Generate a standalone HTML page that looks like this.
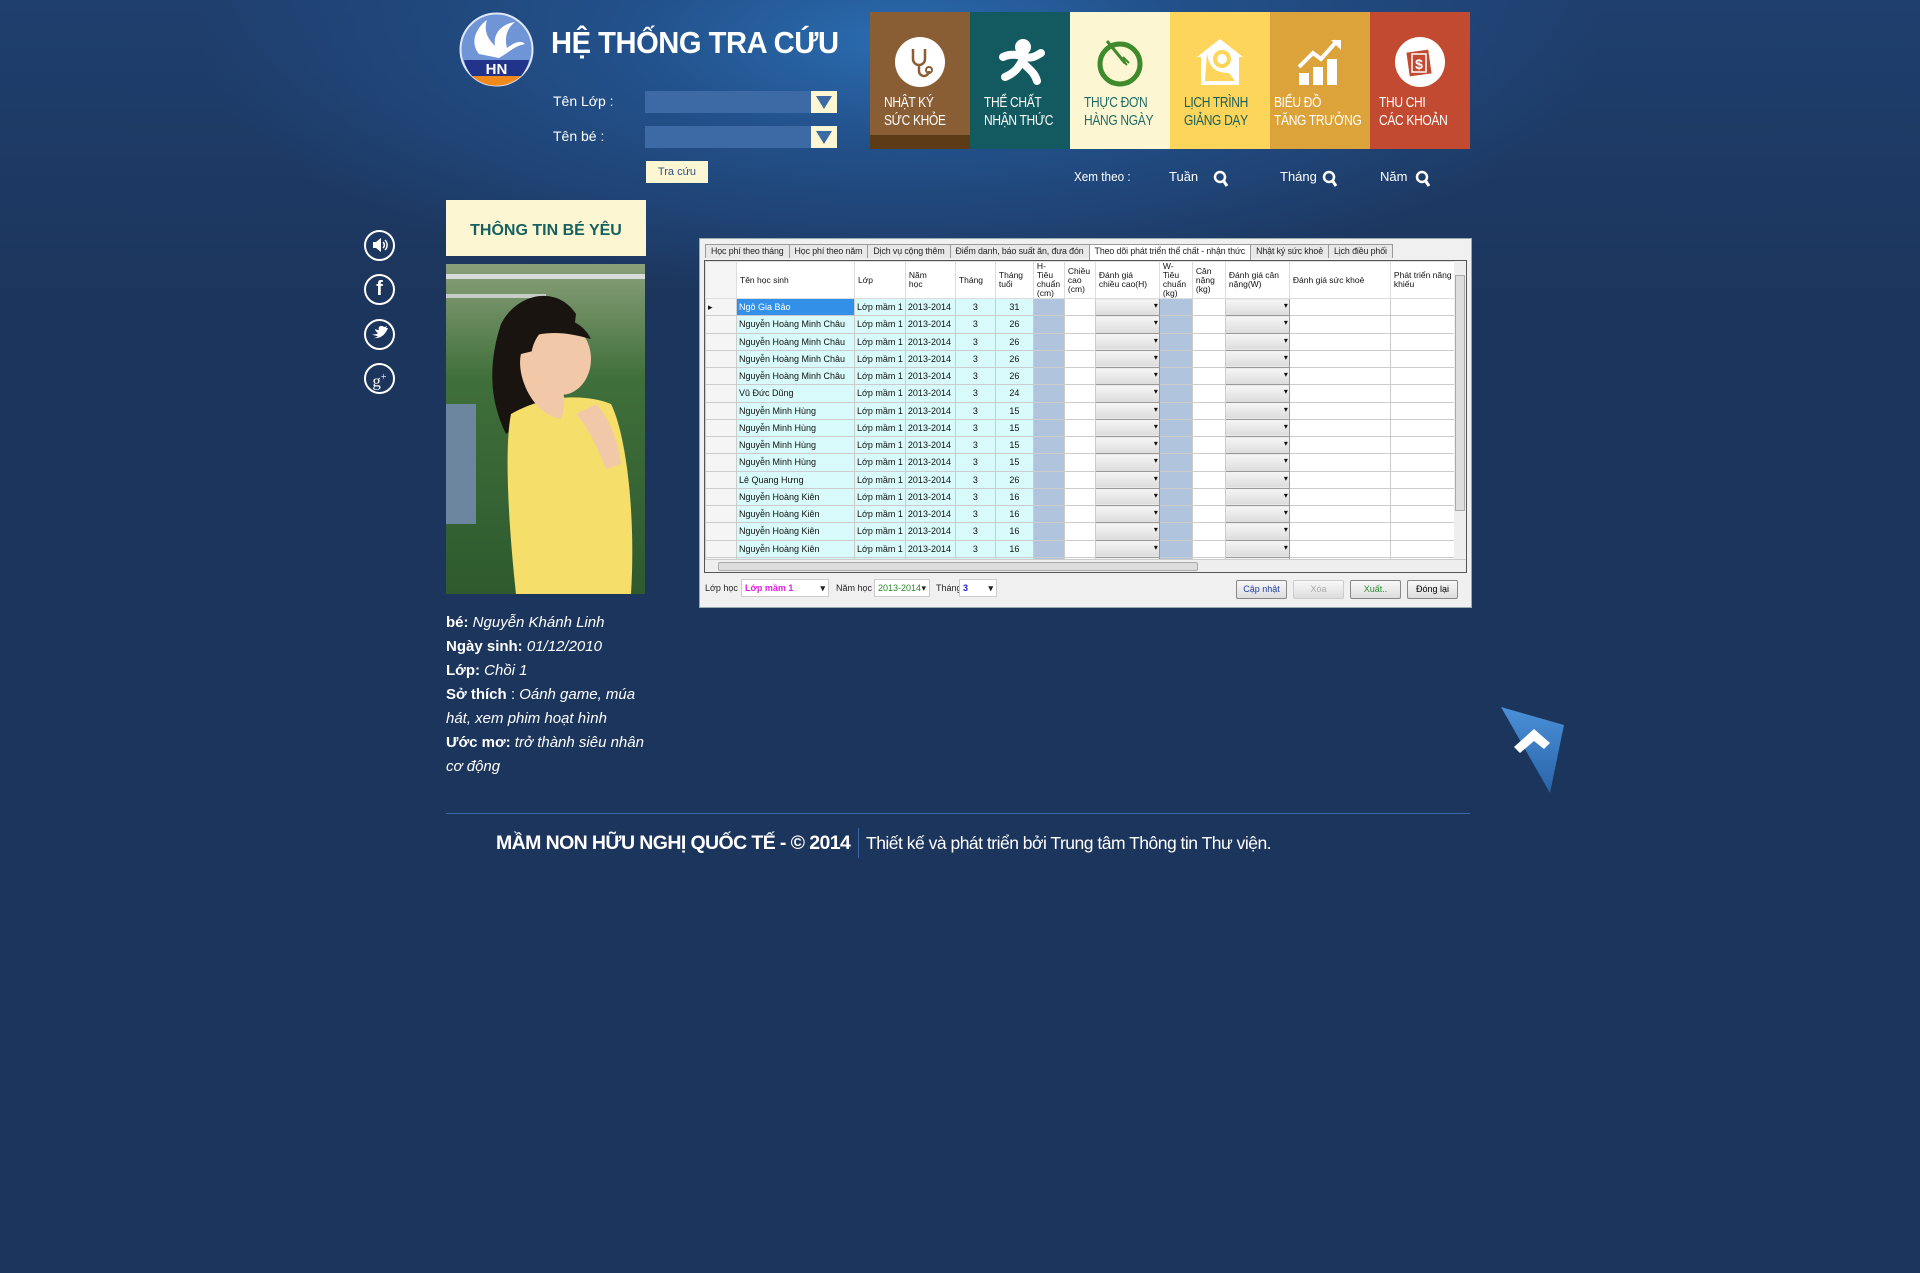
<!DOCTYPE html>
<html><head><meta charset="utf-8">
<style>
*{margin:0;padding:0;box-sizing:border-box}
html,body{width:1920px;height:1273px;overflow:hidden}
body{background:#1c355c;font-family:"Liberation Sans",sans-serif;position:relative;
background-image:radial-gradient(ellipse 700px 260px at 900px 40px,#2a6cb0 0%,#22508a 40%,rgba(28,53,92,0) 100%),linear-gradient(#1f3f6e 0,#1c355c 300px,#1c355c 100%)}
.a{position:absolute}
.t{color:#fff}
.tile{position:absolute;top:12px;width:100px;height:137px}
.tile .ic{position:absolute;left:25px;top:25px;width:50px;height:50px}
.tile .tx{position:absolute;left:14px;top:82px;font-size:15px;line-height:18px;white-space:nowrap;transform:scaleX(.8);transform-origin:left top;letter-spacing:-.4px}
.sel{position:absolute;left:645px;width:192px;height:22px;background:#3d6aa4}
.sel b{position:absolute;right:0;top:0;width:26px;height:22px;background:#fdf6d3}
.sel b:after{content:"";position:absolute;left:5px;top:5px;border-left:8px solid transparent;border-right:8px solid transparent;border-top:13px solid #3d6aa4}
.soc{position:absolute;left:364px;width:31px;height:31px;border:2.5px solid #fff;border-radius:50%;color:#fff;text-align:center;font-weight:bold}
.info{position:absolute;left:446px;top:611px;color:#fff;font-size:15px;line-height:24px;width:200px}
.info i{font-weight:normal}
#pan{position:absolute;left:699px;top:238px;width:773px;height:370px;background:#f0f0f0;border:1px solid #9aa}
.tabs{position:absolute;left:5px;top:3px;height:16px;font-size:8.8px;white-space:nowrap;letter-spacing:-.1px}
.tabs span{display:inline-block;height:14px;margin-top:2px;padding:1px 5px;border:1px solid #999;border-bottom:none;background:#e8e8e8;color:#222;margin-right:-1px}
.tabs span.on{background:#fff;height:17px;margin-top:0}
#grid{position:absolute;left:4px;top:21px;width:763px;height:313px;border:1px solid #555;background:#fff;overflow:hidden}
table{border-collapse:collapse;table-layout:fixed;font-size:9px;color:#111;position:absolute;left:0;top:0}
td{border:1px solid #ccc;height:17.25px;padding:0 2px;white-space:nowrap;overflow:hidden}
th{font-weight:normal;text-align:left;border:1px solid #ddd;height:37px;padding:0 3px;background:#fff;font-size:8.5px;line-height:9px;vertical-align:middle}
td.n{background:#d8fafa}
td.c{text-align:center;background:#d8fafa}
td.b{background:#b0c4de}
td.r{background:#f5f5f5}
td.d{background:linear-gradient(#f6f6f6,#dcdcdc);border:1px solid #999;position:relative}
td.d:after{content:"▾";position:absolute;right:1px;top:2px;font-size:8px}
.hs{position:absolute;left:0;bottom:0;width:761px;height:13px;background:#eee;border-top:1px solid #ccc}
.hs i{position:absolute;left:13px;top:2px;width:480px;height:9px;background:#ddd;border:1px solid #aaa;border-radius:2px}
.vs{position:absolute;right:0;top:0;width:12px;height:299px;background:#eee}
.vs i{position:absolute;left:1px;top:14px;width:10px;height:236px;background:#ddd;border:1px solid #aaa}
.bot{position:absolute;top:344px;font-size:9px;color:#222}
.cb{position:absolute;top:340px;height:18px;background:#fff;border:1px solid #ccc;font-size:9px;padding:3px 3px}
.btn{position:absolute;top:341px;height:19px;width:51px;border:1px solid #888;border-radius:2px;background:linear-gradient(#f8f8f8,#ddd);font-size:9px;text-align:center;line-height:17px}
</style></head><body>

<svg class="a" style="left:459px;top:12px" width="75" height="75" viewBox="0 0 75 75">
<circle cx="37.5" cy="37.5" r="36" fill="#6f95d6" stroke="#dfe8f8" stroke-width="2"/>
<path d="M20 42 C10 30 18 15 28 8 C24 20 30 28 36 34 C34 22 42 12 56 10 C46 18 46 28 48 36 C56 30 62 28 66 32 C56 34 50 40 40 46 Z" fill="#fff"/>
<path d="M5 48 H70 A36 36 0 0 1 62 64 H13 A36 36 0 0 1 5 48Z" fill="#22348a"/>
<text x="37.5" y="62" font-family="Liberation Sans" font-weight="bold" font-size="15" fill="#fff" text-anchor="middle">HN</text>
<path d="M13 64 H62 A36 36 0 0 1 14 65Z" fill="#f08a1c"/>
</svg>
<div class="a t" style="left:551px;top:25px;font-size:31px;font-weight:bold;letter-spacing:-.5px;white-space:nowrap;transform:scaleX(.94);transform-origin:left top">HỆ THỐNG TRA CỨU</div>

<div class="a t" style="left:553px;top:93px;font-size:14px">Tên Lớp :</div>
<div class="sel" style="top:91px"><b></b></div>
<div class="a t" style="left:553px;top:128px;font-size:14px">Tên bé :</div>
<div class="sel" style="top:126px"><b></b></div>
<div class="a" style="left:646px;top:161px;width:62px;height:22px;background:#fdf6d3;color:#2d4f8a;font-size:11px;text-align:center;line-height:22px">Tra cứu</div>

<div class="tile" style="left:870px;background:#8a5e35"><div class="a" style="left:0;top:123px;width:100px;height:14px;background:#5e3b17"></div>
<svg class="ic" viewBox="0 0 50 50"><circle cx="25" cy="25" r="25" fill="#fff"/><path d="M18 12 V22 A6 6 0 0 0 30 22 V12 M24 28 V34 A5 5 0 0 0 34 34" fill="none" stroke="#8a5e35" stroke-width="2.5"/><circle cx="34" cy="33" r="3" fill="none" stroke="#8a5e35" stroke-width="2"/></svg>
<div class="tx t">NHẬT KÝ<br>SỨC KHỎE</div></div>
<div class="tile" style="left:970px;background:#135a60">
<svg class="ic" viewBox="0 0 50 50"><circle cx="28" cy="10" r="8" fill="#fff"/><path d="M8 20 C16 16 24 18 30 20 C38 22 42 18 46 16 M28 22 C24 30 20 36 10 40 M28 26 C34 32 40 36 42 44" fill="none" stroke="#fff" stroke-width="8" stroke-linecap="round"/></svg>
<div class="tx t">THỂ CHẤT<br>NHẬN THỨC</div></div>
<div class="tile" style="left:1070px;background:#fdf6d3">
<svg class="ic" viewBox="0 0 50 50"><circle cx="25" cy="27" r="20" fill="none" stroke="#3f8a2a" stroke-width="5"/><path d="M12 4 L30 26" stroke="#3f8a2a" stroke-width="3"/><path d="M26 22 l6 6 m-4 -8 l6 6" stroke="#3f8a2a" stroke-width="2"/></svg>
<div class="tx" style="color:#1f6b66">THỰC ĐƠN<br>HÀNG NGÀY</div></div>
<div class="tile" style="left:1170px;background:#fdd55a">
<svg class="ic" viewBox="0 0 50 50"><path d="M25 2 L48 20 H44 V48 H6 V20 H2Z" fill="#fff"/><circle cx="27" cy="22" r="7" fill="none" stroke="#fdd55a" stroke-width="4"/><path d="M12 16 C14 30 20 36 34 36 L40 44 H10Z" fill="#fdd55a"/></svg>
<div class="tx" style="color:#1a5d5d">LỊCH TRÌNH<br>GIẢNG DẠY</div></div>
<div class="tile" style="left:1270px;background:#dca33a">
<svg class="ic" viewBox="0 0 50 50"><rect x="4" y="36" width="10" height="12" fill="#fff"/><rect x="18" y="30" width="10" height="18" fill="#fff"/><rect x="32" y="22" width="10" height="26" fill="#fff"/><path d="M4 30 L18 16 L26 22 L42 4" fill="none" stroke="#fff" stroke-width="4"/><path d="M36 3 H46 V13Z" fill="#fff"/></svg>
<div class="tx t" style="left:4px">BIỂU ĐỒ<br>TĂNG TRƯỞNG</div></div>
<div class="tile" style="left:1370px;background:#c14a30">
<svg class="ic" viewBox="0 0 50 50"><circle cx="25" cy="25" r="25" fill="#fff"/><rect x="13" y="14" width="22" height="24" fill="#c14a30" transform="rotate(-8 24 26)"/><rect x="17" y="17" width="14" height="18" fill="none" stroke="#fff" stroke-width="1.5"/><text x="24" y="32" font-size="14" font-weight="bold" fill="#fff" text-anchor="middle" font-family="Liberation Sans">$</text></svg>
<div class="tx t" style="left:9px">THU CHI<br>CÁC KHOẢN</div></div>

<div class="a t" style="left:1074px;top:169px;font-size:13px;transform:scaleX(.9);transform-origin:left">Xem theo :</div>
<div class="a t" style="left:1169px;top:169px;font-size:13px">Tuần</div>
<div class="a t" style="left:1280px;top:169px;font-size:13px">Tháng</div>
<div class="a t" style="left:1380px;top:169px;font-size:13px">Năm</div>
<svg class="a" style="left:1213px;top:170px" width="16" height="18"><circle cx="7" cy="7" r="5" fill="none" stroke="#fff" stroke-width="2.5"/><path d="M10 10 L14 16" stroke="#fff" stroke-width="3"/></svg>
<svg class="a" style="left:1322px;top:170px" width="16" height="18"><circle cx="7" cy="7" r="5" fill="none" stroke="#fff" stroke-width="2.5"/><path d="M10 10 L14 16" stroke="#fff" stroke-width="3"/></svg>
<svg class="a" style="left:1415px;top:170px" width="16" height="18"><circle cx="7" cy="7" r="5" fill="none" stroke="#fff" stroke-width="2.5"/><path d="M10 10 L14 16" stroke="#fff" stroke-width="3"/></svg>

<div class="soc" style="top:230px"><svg width="26" height="26" viewBox="0 0 26 26"><path d="M6 10 H9 L14 6 V20 L9 16 H6Z" fill="#fff"/><path d="M16 10 A4 4 0 0 1 16 16 M18 8 A7 7 0 0 1 18 18" fill="none" stroke="#fff" stroke-width="1.5"/></svg></div>
<div class="soc" style="top:274px;font-size:20px;line-height:27px;font-family:'Liberation Sans'">f</div>
<div class="soc" style="top:319px"><svg width="26" height="26" viewBox="0 0 26 26"><path d="M5 13 C8 14 10 13 11 12 C9 11 8 9 8 8 C10 9 11 9 12 9 C11 7 12 5 14 5 C16 5 17 6 18 6 L20 5 L19 7 L21 7 C19 12 15 18 6 17 C9 17 10 16 11 15 C9 15 6 14 5 13Z" fill="#fff"/></svg></div>
<div class="soc" style="top:363px;font-size:17px;line-height:25px;font-family:'Liberation Serif';font-weight:normal">g<sup style="font-size:10px">+</sup></div>

<div class="a" style="left:446px;top:200px;width:200px;height:56px;background:#fdf6d3;color:#15615f;font-weight:bold;font-size:16px;text-align:center;line-height:62px">THÔNG TIN BÉ YÊU</div>
<svg class="a" style="left:446px;top:264px" width="199" height="330" viewBox="0 0 199 330">
<defs><linearGradient id="bg" x1="0" y1="0" x2="0" y2="1"><stop offset="0" stop-color="#8aa07a"/><stop offset=".35" stop-color="#3f6f3a"/><stop offset="1" stop-color="#2e5a2e"/></linearGradient></defs>
<rect width="199" height="330" fill="url(#bg)"/>
<rect x="0" y="10" width="199" height="5" fill="#d8dcd8"/><rect x="0" y="30" width="100" height="4" fill="#c8ccc8"/>
<rect x="0" y="140" width="30" height="120" fill="#6c86a0"/>
<path d="M55 60 C70 30 110 20 130 50 L120 130 L60 170 C40 130 45 90 55 60Z" fill="#1a1410"/>
<ellipse cx="115" cy="95" rx="30" ry="36" fill="#f1c9a8"/>
<path d="M78 75 C90 50 130 45 145 75 C120 68 100 66 78 75Z" fill="#1a1410"/>
<path d="M65 150 C55 200 70 330 70 330 H185 C190 250 180 170 165 140 C140 130 100 130 65 150Z" fill="#f6de6a"/>
<path d="M75 90 C70 110 85 150 115 155 C125 130 110 100 95 85Z" fill="#f1c9a8"/>
<path d="M150 140 C165 155 172 180 175 200 L160 205 C150 180 140 160 130 150Z" fill="#f1c9a8"/>
</svg>
<div class="info"><b>bé:</b> <i>Nguyễn Khánh Linh</i><br><b>Ngày sinh:</b> <i>01/12/2010</i><br><b>Lớp:</b> <i>Chồi 1</i><br><b>Sở thích</b> : <i>Oánh game, múa hát, xem phim hoạt hình</i><br><b>Ước mơ:</b> <i>trở thành siêu nhân cơ động</i></div>

<div id="pan">
<div class="tabs"><span>Học phí theo tháng</span><span>Học phí theo năm</span><span>Dịch vụ cộng thêm</span><span>Điểm danh, báo suất ăn, đưa đón</span><span class="on">Theo dõi phát triển thể chất - nhận thức</span><span>Nhật ký sức khoẻ</span><span>Lịch điều phối</span></div>
<div id="grid">
<table>
<colgroup><col style="width:31px"><col style="width:118px"><col style="width:48px"><col style="width:50px"><col style="width:40px"><col style="width:38px"><col style="width:31px"><col style="width:31px"><col style="width:64px"><col style="width:33px"><col style="width:33px"><col style="width:64px"><col style="width:101px"><col style="width:67px"></colgroup>
<tr><th style="background:#f5f5f5"></th><th>Tên học sinh</th><th>Lớp</th><th>Năm<br>học</th><th>Tháng</th><th>Tháng<br>tuổi</th><th>H-Tiêu<br>chuẩn<br>(cm)</th><th>Chiều<br>cao<br>(cm)</th><th>Đánh giá<br>chiều cao(H)</th><th>W-Tiêu<br>chuẩn<br>(kg)</th><th>Cân<br>nặng<br>(kg)</th><th>Đánh giá cân<br>nặng(W)</th><th>Đánh giá sức khoẻ</th><th>Phát triển năng<br>khiếu</th></tr>
<tr><td class="r">▸</td><td style="background:#3390e8;color:#fff">Ngô Gia Bảo</td><td class="n">Lớp mầm 1</td><td class="n">2013-2014</td><td class="c">3</td><td class="c">31</td><td class="b"></td><td></td><td class="d"></td><td class="b"></td><td></td><td class="d"></td><td></td><td></td></tr>
<tr><td class="r"></td><td class="n">Nguyễn Hoàng Minh Châu</td><td class="n">Lớp mầm 1</td><td class="n">2013-2014</td><td class="c">3</td><td class="c">26</td><td class="b"></td><td></td><td class="d"></td><td class="b"></td><td></td><td class="d"></td><td></td><td></td></tr>
<tr><td class="r"></td><td class="n">Nguyễn Hoàng Minh Châu</td><td class="n">Lớp mầm 1</td><td class="n">2013-2014</td><td class="c">3</td><td class="c">26</td><td class="b"></td><td></td><td class="d"></td><td class="b"></td><td></td><td class="d"></td><td></td><td></td></tr>
<tr><td class="r"></td><td class="n">Nguyễn Hoàng Minh Châu</td><td class="n">Lớp mầm 1</td><td class="n">2013-2014</td><td class="c">3</td><td class="c">26</td><td class="b"></td><td></td><td class="d"></td><td class="b"></td><td></td><td class="d"></td><td></td><td></td></tr>
<tr><td class="r"></td><td class="n">Nguyễn Hoàng Minh Châu</td><td class="n">Lớp mầm 1</td><td class="n">2013-2014</td><td class="c">3</td><td class="c">26</td><td class="b"></td><td></td><td class="d"></td><td class="b"></td><td></td><td class="d"></td><td></td><td></td></tr>
<tr><td class="r"></td><td class="n">Vũ Đức Dũng</td><td class="n">Lớp mầm 1</td><td class="n">2013-2014</td><td class="c">3</td><td class="c">24</td><td class="b"></td><td></td><td class="d"></td><td class="b"></td><td></td><td class="d"></td><td></td><td></td></tr>
<tr><td class="r"></td><td class="n">Nguyễn Minh Hùng</td><td class="n">Lớp mầm 1</td><td class="n">2013-2014</td><td class="c">3</td><td class="c">15</td><td class="b"></td><td></td><td class="d"></td><td class="b"></td><td></td><td class="d"></td><td></td><td></td></tr>
<tr><td class="r"></td><td class="n">Nguyễn Minh Hùng</td><td class="n">Lớp mầm 1</td><td class="n">2013-2014</td><td class="c">3</td><td class="c">15</td><td class="b"></td><td></td><td class="d"></td><td class="b"></td><td></td><td class="d"></td><td></td><td></td></tr>
<tr><td class="r"></td><td class="n">Nguyễn Minh Hùng</td><td class="n">Lớp mầm 1</td><td class="n">2013-2014</td><td class="c">3</td><td class="c">15</td><td class="b"></td><td></td><td class="d"></td><td class="b"></td><td></td><td class="d"></td><td></td><td></td></tr>
<tr><td class="r"></td><td class="n">Nguyễn Minh Hùng</td><td class="n">Lớp mầm 1</td><td class="n">2013-2014</td><td class="c">3</td><td class="c">15</td><td class="b"></td><td></td><td class="d"></td><td class="b"></td><td></td><td class="d"></td><td></td><td></td></tr>
<tr><td class="r"></td><td class="n">Lê Quang Hưng</td><td class="n">Lớp mầm 1</td><td class="n">2013-2014</td><td class="c">3</td><td class="c">26</td><td class="b"></td><td></td><td class="d"></td><td class="b"></td><td></td><td class="d"></td><td></td><td></td></tr>
<tr><td class="r"></td><td class="n">Nguyễn Hoàng Kiên</td><td class="n">Lớp mầm 1</td><td class="n">2013-2014</td><td class="c">3</td><td class="c">16</td><td class="b"></td><td></td><td class="d"></td><td class="b"></td><td></td><td class="d"></td><td></td><td></td></tr>
<tr><td class="r"></td><td class="n">Nguyễn Hoàng Kiên</td><td class="n">Lớp mầm 1</td><td class="n">2013-2014</td><td class="c">3</td><td class="c">16</td><td class="b"></td><td></td><td class="d"></td><td class="b"></td><td></td><td class="d"></td><td></td><td></td></tr>
<tr><td class="r"></td><td class="n">Nguyễn Hoàng Kiên</td><td class="n">Lớp mầm 1</td><td class="n">2013-2014</td><td class="c">3</td><td class="c">16</td><td class="b"></td><td></td><td class="d"></td><td class="b"></td><td></td><td class="d"></td><td></td><td></td></tr>
<tr><td class="r"></td><td class="n">Nguyễn Hoàng Kiên</td><td class="n">Lớp mầm 1</td><td class="n">2013-2014</td><td class="c">3</td><td class="c">16</td><td class="b"></td><td></td><td class="d"></td><td class="b"></td><td></td><td class="d"></td><td></td><td></td></tr>
<tr><td class="r"></td><td class="n"></td><td class="n"></td><td class="n"></td><td class="c"></td><td class="c"></td><td class="b"></td><td></td><td class="d"></td><td class="b"></td><td></td><td class="d"></td><td></td><td></td></tr>
</table>
<div class="vs"><i></i></div>
<div class="hs"><i></i></div>
</div>
<div class="bot" style="left:5px">Lớp học</div>
<div class="cb" style="left:41px;width:88px;color:#e020e0;font-weight:bold">Lớp mầm 1 <span style="float:right;color:#222">▾</span></div>
<div class="bot" style="left:136px">Năm học</div>
<div class="cb" style="left:174px;width:56px;color:#2a8a2a">2013-2014 <span style="float:right;color:#222">▾</span></div>
<div class="bot" style="left:236px">Tháng</div>
<div class="cb" style="left:259px;width:38px;color:#2020e0;font-weight:bold">3 <span style="float:right;color:#222">▾</span></div>
<div class="btn" style="left:536px;color:#2040a0">Cập nhật</div>
<div class="btn" style="left:593px;color:#aaa;border-color:#ccc">Xóa</div>
<div class="btn" style="left:650px;color:#2a8a2a">Xuất..</div>
<div class="btn" style="left:707px">Đóng lại</div>
</div>

<svg class="a" style="left:1500px;top:705px" width="66" height="90" viewBox="0 0 66 90">
<defs><linearGradient id="sg" x1="0" y1="0" x2="0" y2="1"><stop offset="0" stop-color="#4a90d8"/><stop offset="1" stop-color="#2a64a8"/></linearGradient></defs>
<path d="M1 2 L64 20 L50 88Z" fill="url(#sg)"/>
<path d="M14 42 L34 24 L50 38 L44 44 L34 36 L20 48Z" fill="#fff"/>
</svg>

<div class="a" style="left:446px;top:813px;width:1024px;height:1px;background:#3a68a8"></div>
<div class="a t" style="left:496px;top:832px;font-size:19.5px;font-weight:bold;white-space:nowrap;letter-spacing:-.6px">MẦM NON HỮU NGHỊ QUỐC TẾ - © 2014</div>
<div class="a" style="left:858px;top:828px;width:1px;height:30px;background:#3a68a8"></div>
<div class="a t" style="left:866px;top:833px;font-size:17.5px;white-space:nowrap;letter-spacing:-.5px">Thiết kế và phát triển bởi Trung tâm Thông tin Thư viện.</div>
</body></html>
